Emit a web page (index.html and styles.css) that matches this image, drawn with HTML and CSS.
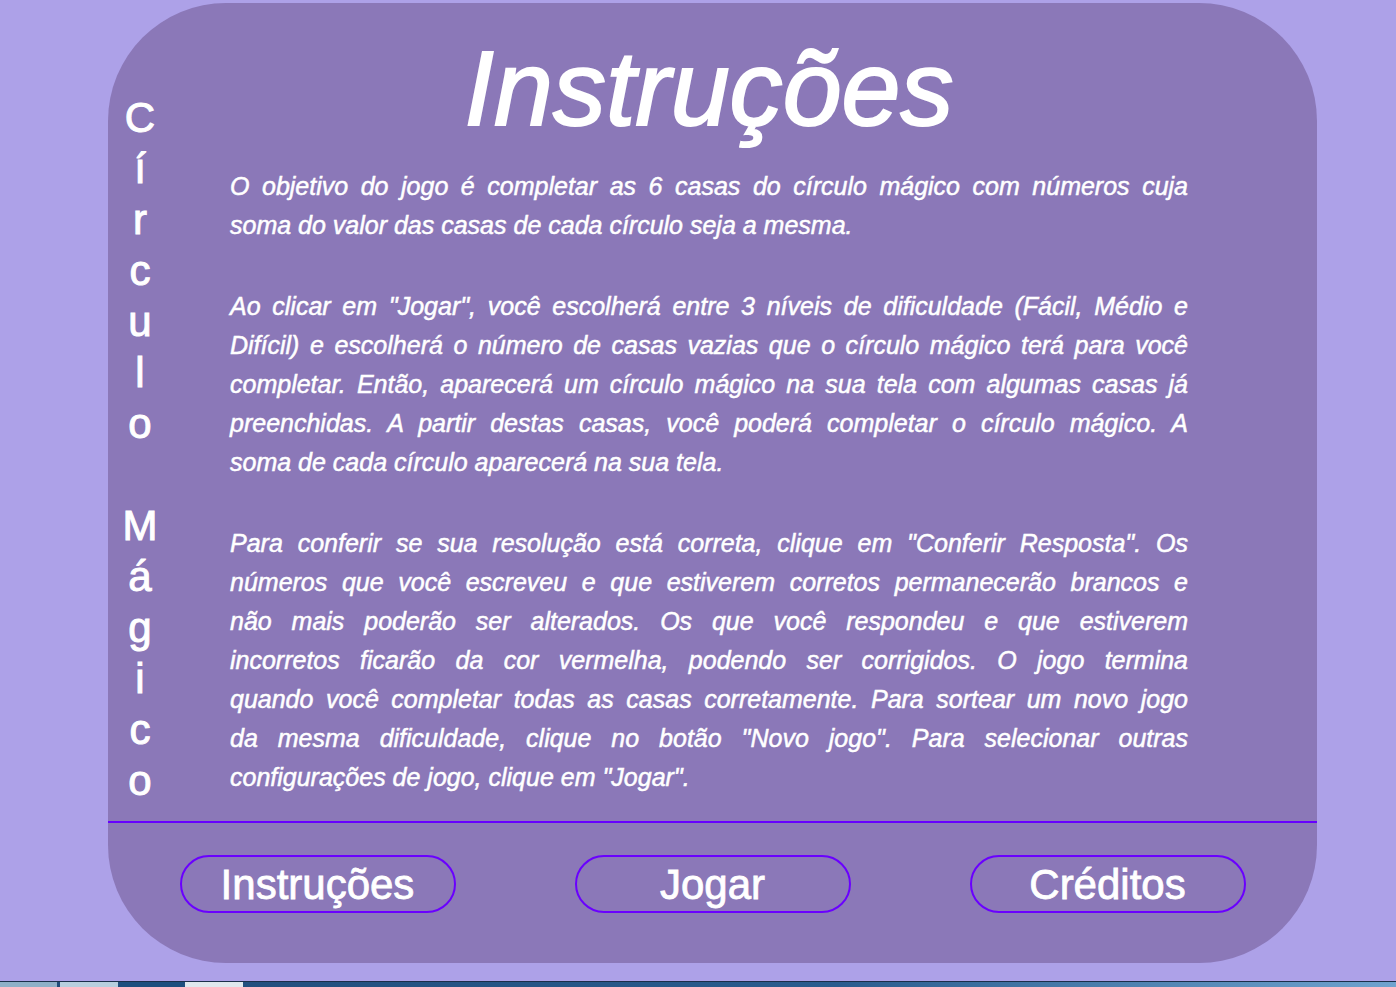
FILE: index.html
```html
<!DOCTYPE html>
<html lang="pt-BR">
<head>
<meta charset="utf-8">
<title>Círculo Mágico - Instruções</title>
<link rel="stylesheet" href="styles.css">
</head>
<body>
<div class="page">
  <main class="card">
    <section class="top">
      <div class="side">
        <span>C</span><span>í</span><span>r</span><span>c</span><span>u</span><span>l</span><span>o</span><span class="gap"></span><span>M</span><span>á</span><span>g</span><span>i</span><span>c</span><span>o</span>
      </div>
      <div class="content">
        <h1 class="title">Instruções</h1>
        <div class="para">
          <span class="ln">O objetivo do jogo é completar as 6 casas do círculo mágico com números cuja</span>
          <span class="ln last">soma do valor das casas de cada círculo seja a mesma.</span>
        </div>
        <div class="para">
          <span class="ln">Ao clicar em "Jogar", você escolherá entre 3 níveis de dificuldade (Fácil, Médio e</span>
          <span class="ln">Difícil) e escolherá o número de casas vazias que o círculo mágico terá para você</span>
          <span class="ln">completar. Então, aparecerá um círculo mágico na sua tela com algumas casas já</span>
          <span class="ln">preenchidas. A partir destas casas, você poderá completar o círculo mágico. A</span>
          <span class="ln last">soma de cada círculo aparecerá na sua tela.</span>
        </div>
        <div class="para">
          <span class="ln">Para conferir se sua resolução está correta, clique em "Conferir Resposta". Os</span>
          <span class="ln">números que você escreveu e que estiverem corretos permanecerão brancos e</span>
          <span class="ln">não mais poderão ser alterados. Os que você respondeu e que estiverem</span>
          <span class="ln">incorretos ficarão da cor vermelha, podendo ser corrigidos. O jogo termina</span>
          <span class="ln">quando você completar todas as casas corretamente. Para sortear um novo jogo</span>
          <span class="ln">da mesma dificuldade, clique no botão "Novo jogo". Para selecionar outras</span>
          <span class="ln last">configurações de jogo, clique em "Jogar".</span>
        </div>
      </div>
    </section>
    <nav class="menu">
      <button class="btn">Instruções</button>
      <button class="btn">Jogar</button>
      <button class="btn">Créditos</button>
    </nav>
  </main>
</div>
<footer class="taskbar">
  <span class="tb tb-a"></span>
  <span class="tb tb-b"></span>
  <span class="tb tb-c"></span>
  <span class="tb tb-d"></span>
  <span class="tb tb-rest"></span>
</footer>
</body>
</html>
```
FILE: styles.css
```css
* { box-sizing: border-box; }

html, body {
  margin: 0;
  height: 987px;
  overflow: hidden;
}

body {
  background: #ada1e8;
  font-family: "Liberation Sans", Arial, sans-serif;
  color: #ffffff;
  display: flex;
  flex-direction: column;
}

.page {
  flex: 1;
  padding: 3px 0 0 108px;
}

.card {
  width: 1209px;
  height: 960px;
  background: #8b78b8;
  border-radius: 118px;
  display: flex;
  flex-direction: column;
}

.top {
  height: 820px;
  display: grid;
  grid-template-columns: 64px 958px;
  column-gap: 58px;
  border-bottom: 2px solid #6600ff;
}

.side {
  padding-top: 89px;
  display: flex;
  flex-direction: column;
  align-items: center;
  font-size: 42px;
  line-height: 51px;
  -webkit-text-stroke: 1px #ffffff;
}

.side span {
  display: block;
  height: 51px;
}

.content {
  padding-top: 32px;
}

.title {
  margin: 0;
  font-size: 106px;
  line-height: 106px;
  font-style: italic;
  font-weight: normal;
  text-align: center;
  height: 132px;
  -webkit-text-stroke: 2px #ffffff;
}

.para {
  font-style: italic;
  font-size: 25px;
  line-height: 39.1px;
  margin-bottom: 41.5px;
  -webkit-text-stroke: 0.5px #ffffff;
}

.ln {
  display: block;
  white-space: nowrap;
  text-align: justify;
  text-align-last: justify;
}

.ln.last {
  text-align-last: left;
}

.menu {
  display: flex;
  justify-content: center;
  gap: 119px;
  padding-top: 32px;
}

.btn {
  width: 276px;
  height: 58px;
  border: 2px solid #6a00ff;
  border-radius: 30px;
  background: transparent;
  color: #ffffff;
  font-family: "Liberation Sans", Arial, sans-serif;
  font-size: 42px;
  line-height: 1;
  padding: 2px 0 0;
  -webkit-text-stroke: 0.8px #ffffff;
}

.taskbar {
  height: 6px;
  display: flex;
  border-top: 1px solid #1b2f4a;
  background: linear-gradient(90deg, #1f4a78 0%, #2a5c8e 60%, #6fa3cf 100%);
}

.tb { display: block; height: 100%; }
.tb-a { width: 57px; background: #8fb0c8; }
.tb-b { width: 58px; margin-left: 3px; background: #b8cfde; }
.tb-c { width: 64px; margin-left: 2px; background: #1d4f7e; }
.tb-d { width: 58px; margin-left: 1px; background: #dfe8ee; }
.tb-rest { flex: 1; }
```
